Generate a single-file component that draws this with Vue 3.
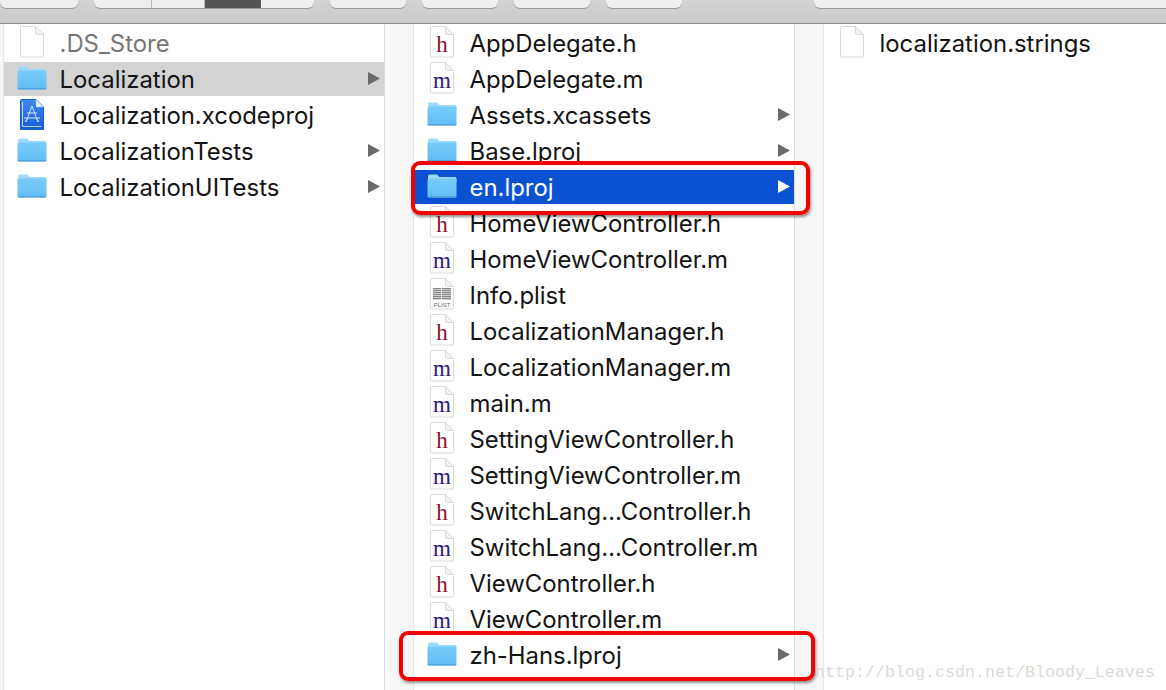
<script setup>
const col1 = [
  { name: '.DS_Store', icon: 'doc', dim: true },
  { name: 'Localization', icon: 'folder', arrow: true, state: 'gray' },
  { name: 'Localization.xcodeproj', icon: 'xcode' },
  { name: 'LocalizationTests', icon: 'folder', arrow: true },
  { name: 'LocalizationUITests', icon: 'folder', arrow: true },
]
const col2 = [
  { name: 'AppDelegate.h', icon: 'h' },
  { name: 'AppDelegate.m', icon: 'm' },
  { name: 'Assets.xcassets', icon: 'folder', arrow: true },
  { name: 'Base.lproj', icon: 'folder', arrow: true },
  { name: 'en.lproj', icon: 'folder', arrow: true, state: 'blue' },
  { name: 'HomeViewController.h', icon: 'h' },
  { name: 'HomeViewController.m', icon: 'm' },
  { name: 'Info.plist', icon: 'plist' },
  { name: 'LocalizationManager.h', icon: 'h' },
  { name: 'LocalizationManager.m', icon: 'm' },
  { name: 'main.m', icon: 'm' },
  { name: 'SettingViewController.h', icon: 'h' },
  { name: 'SettingViewController.m', icon: 'm' },
  { name: 'SwitchLang…Controller.h', icon: 'h' },
  { name: 'SwitchLang…Controller.m', icon: 'm' },
  { name: 'ViewController.h', icon: 'h' },
  { name: 'ViewController.m', icon: 'm' },
  { name: 'zh-Hans.lproj', icon: 'folder', arrow: true },
]
const col3 = [{ name: 'localization.strings', icon: 'doc' }]
const columns = [col1, col2, col3]
const docIcons = ['doc', 'h', 'm', 'plist']
const tableRows = [10.5, 12.5, 14.5, 16.5, 18.5, 20.5]
</script>

<template>
  <div class="window">
    <header class="toolbar">
      <div class="btn w78"></div>
      <div class="btn segmented">
        <span class="seg s58"></span>
        <span class="seg s53"></span>
        <span class="seg s56 active"></span>
        <span class="seg s53 last"></span>
      </div>
      <div class="btn w76"></div>
      <div class="btn w76"></div>
      <div class="btn w76"></div>
      <div class="btn w76"></div>
      <div class="btn search"></div>
    </header>

    <main class="browser">
      <template v-for="(col, c) in columns" :key="c">
        <div class="gutter" :class="{ first: c === 0 }"></div>
        <section class="column" :class="{ last: c === 2 }">
          <div v-for="item in col" :key="item.name" class="row" :class="item.state">
            <span class="icon">
              <svg v-if="item.icon === 'folder'" width="30" height="24" viewBox="0 0 30 24">
                <defs>
                  <linearGradient id="fold" x1="0" y1="0" x2="0" y2="1">
                    <stop offset="0" stop-color="#78ccfa" />
                    <stop offset="1" stop-color="#62bdf6" />
                  </linearGradient>
                </defs>
                <path d="M1 4 V2 a1.500 1.500 0 0 1 1.500-1.500 H10 L12.500 3 H28 a1.500 1.500 0 0 1 1.500 1.500 V8 H1 Z" fill="#9bdafc" />
                <path d="M.5 6 a1.500 1.500 0 0 1 1.500-1.500 H28 a1.500 1.500 0 0 1 1.500 1.500 V22 a1.500 1.500 0 0 1-1.500 1.500 H2 a1.500 1.500 0 0 1-1.500-1.500 Z" fill="url(#fold)" />
                <path d="M.5 22 a1.500 1.500 0 0 0 1.500 1.500 H28 a1.500 1.500 0 0 0 1.500-1.500 V22 Z" fill="#55a5da" />
              </svg>
              <svg v-else-if="docIcons.includes(item.icon)" width="24" height="32" viewBox="0 0 24 32">
                <path d="M1.500 .5 H15.500 L23.500 8.500 V29.500 a1.500 1.500 0 0 1-1.500 1.500 H2 a1.500 1.500 0 0 1-1.500-1.500 V1.500 a1 1 0 0 1 1-1 Z" fill="#fff" stroke="#d9d9d9" />
                <path d="M15.500 .5 V7 a1.500 1.500 0 0 0 1.500 1.500 H23.500 Z" fill="#f1f1f1" stroke="#d9d9d9" />
                <text v-if="item.icon === 'h'" class="code-letter" x="12" y="26" text-anchor="middle" fill="#8a1230">h</text>
                <text v-else-if="item.icon === 'm'" class="code-letter" x="12" y="26" text-anchor="middle" fill="#2f1a80">m</text>
                <template v-else-if="item.icon === 'plist'">
                  <rect x="3" y="10" width="18" height="12" fill="#d0d0d0" />
                  <path v-for="y in tableRows" :key="y" :d="`M3 ${y} H21`" stroke="#858585" stroke-width="1" />
                  <path d="M11.500 10 V22" stroke="#f2f2f2" stroke-width="1" />
                  <text class="plist-label" x="12" y="28.500" text-anchor="middle">PLIST</text>
                </template>
              </svg>
              <svg v-else width="24" height="31" viewBox="0 0 24 31">
                <defs>
                  <linearGradient id="xc" x1="0" y1="0" x2="0" y2="1">
                    <stop offset="0" stop-color="#3f8cf0" />
                    <stop offset="1" stop-color="#1459dc" />
                  </linearGradient>
                </defs>
                <path d="M1.500 .5 H16 L23.500 8 V30.500 H.5 V1.500 a1 1 0 0 1 1-1 Z" fill="url(#xc)" stroke="#1c5fc9" />
                <path d="M16 .5 V8 H23.500 Z" fill="#e8f0fb" stroke="#9dbbe8" stroke-width=".5" />
                <path d="M2.500 3 V27.500 H21.500" stroke="#bcd5f8" stroke-width="1" fill="none" />
                <path d="M12 7 L6 23 M12 7 L18 23 M4 19 H20 M7 14 H17 M5 23 L8 19 M19 23 L16 19" stroke="#d6e6fd" stroke-width="1" fill="none" />
              </svg>
            </span>
            <span class="label" :class="{ dim: item.dim }">{{ item.name }}</span>
            <svg v-if="item.arrow" class="arrow" width="12" height="13" viewBox="0 0 12 13">
              <path d="M0 0 L12 6.500 L0 13 Z" />
            </svg>
          </div>
        </section>
      </template>
      <div class="callout callout-en"></div>
      <div class="callout callout-zh"></div>
      <div class="watermark">http://blog.csdn.net/Bloody_Leaves</div>
    </main>
  </div>
</template>

<style scoped>
.window {
  width: 1166px;
  height: 690px;
  overflow: hidden;
  background: #fff;
  font-family: Inter, "Liberation Sans", sans-serif;
  display: flex;
  flex-direction: column;
}
.toolbar {
  height: 23px;
  flex: none;
  display: flex;
  align-items: flex-start;
  gap: 16px;
  background: linear-gradient(#d3d1d3, #cbc9cb);
  border-bottom: 1px solid #8c8c8c;
}
.btn {
  height: 8px;
  background: #eeeeee;
  border-radius: 0 0 6px 6px;
  box-shadow: 0 1px 0 #9c9a9c;
  flex: none;
}
.w78 { width: 78px; }
.w76 { width: 76px; }
.segmented {
  display: flex;
  overflow: hidden;
}
.seg {
  display: block;
  height: 8px;
  border-right: 1px solid #b5b5b5;
  box-sizing: border-box;
}
.seg.last { border-right: 0; }
.s58 { width: 58px; }
.s53 { width: 53px; }
.s56 { width: 56px; }
.seg.active {
  background: #555555;
  border-right: 0;
}
.search {
  flex: 1;
  border-radius: 0 0 0 6px;
  margin-left: 116px;
}
.browser {
  position: relative;
  flex: 1;
  display: flex;
  min-height: 0;
}
.gutter {
  width: 28px;
  flex: none;
  background: #f7f7f7;
  border-right: 1px solid #e6e6e6;
}
.gutter.first {
  width: 3px;
}
.column {
  width: 380px;
  flex: none;
  padding-top: 2px;
  display: flex;
  flex-direction: column;
  gap: 2px;
  border-right: 1px solid #dcdcdc;
  background: #fff;
}
.column.last {
  flex: 1;
  border-right: 0;
}
.row {
  height: 34px;
  flex: none;
  display: flex;
  align-items: center;
  padding: 0 4px 0 13px;
  color: #141414;
}
.row.gray { background: #d3d3d3; }
.row.blue {
  background: #0a52d2;
  color: #fff;
}
.icon {
  width: 30px;
  height: 34px;
  flex: none;
  display: flex;
  align-items: center;
  justify-content: center;
}
.icon svg {
  margin-bottom: 2px;
}
.label {
  margin-left: 12.5px;
  padding-top: 2px;
  font-size: 23.9px;
  line-height: 32px;
  white-space: nowrap;
}
.label.dim { color: #777777; }
.arrow {
  margin-left: auto;
  margin-bottom: 1px;
  fill: #6a6a6a;
  flex: none;
}
.row.blue .arrow { fill: #fff; }
.code-letter {
  font-family: "Liberation Serif", serif;
  font-size: 23px;
}
.plist-label {
  font-family: "Liberation Sans", sans-serif;
  font-size: 6px;
  fill: #666;
}
.callout {
  position: absolute;
  box-sizing: border-box;
  border: 4px solid #f50000;
  border-radius: 9px;
  box-shadow: 1px 2px 3px rgba(0, 0, 0, 0.45);
}
.callout-en {
  left: 411px;
  top: 137px;
  width: 399px;
  height: 54px;
}
.callout-zh {
  left: 399px;
  top: 607px;
  width: 416px;
  height: 50px;
}
.watermark {
  position: absolute;
  left: 815px;
  top: 639px;
  font-family: "Liberation Mono", monospace;
  font-size: 16.67px;
  line-height: 20px;
  color: #dcdad6;
  white-space: nowrap;
}
</style>
